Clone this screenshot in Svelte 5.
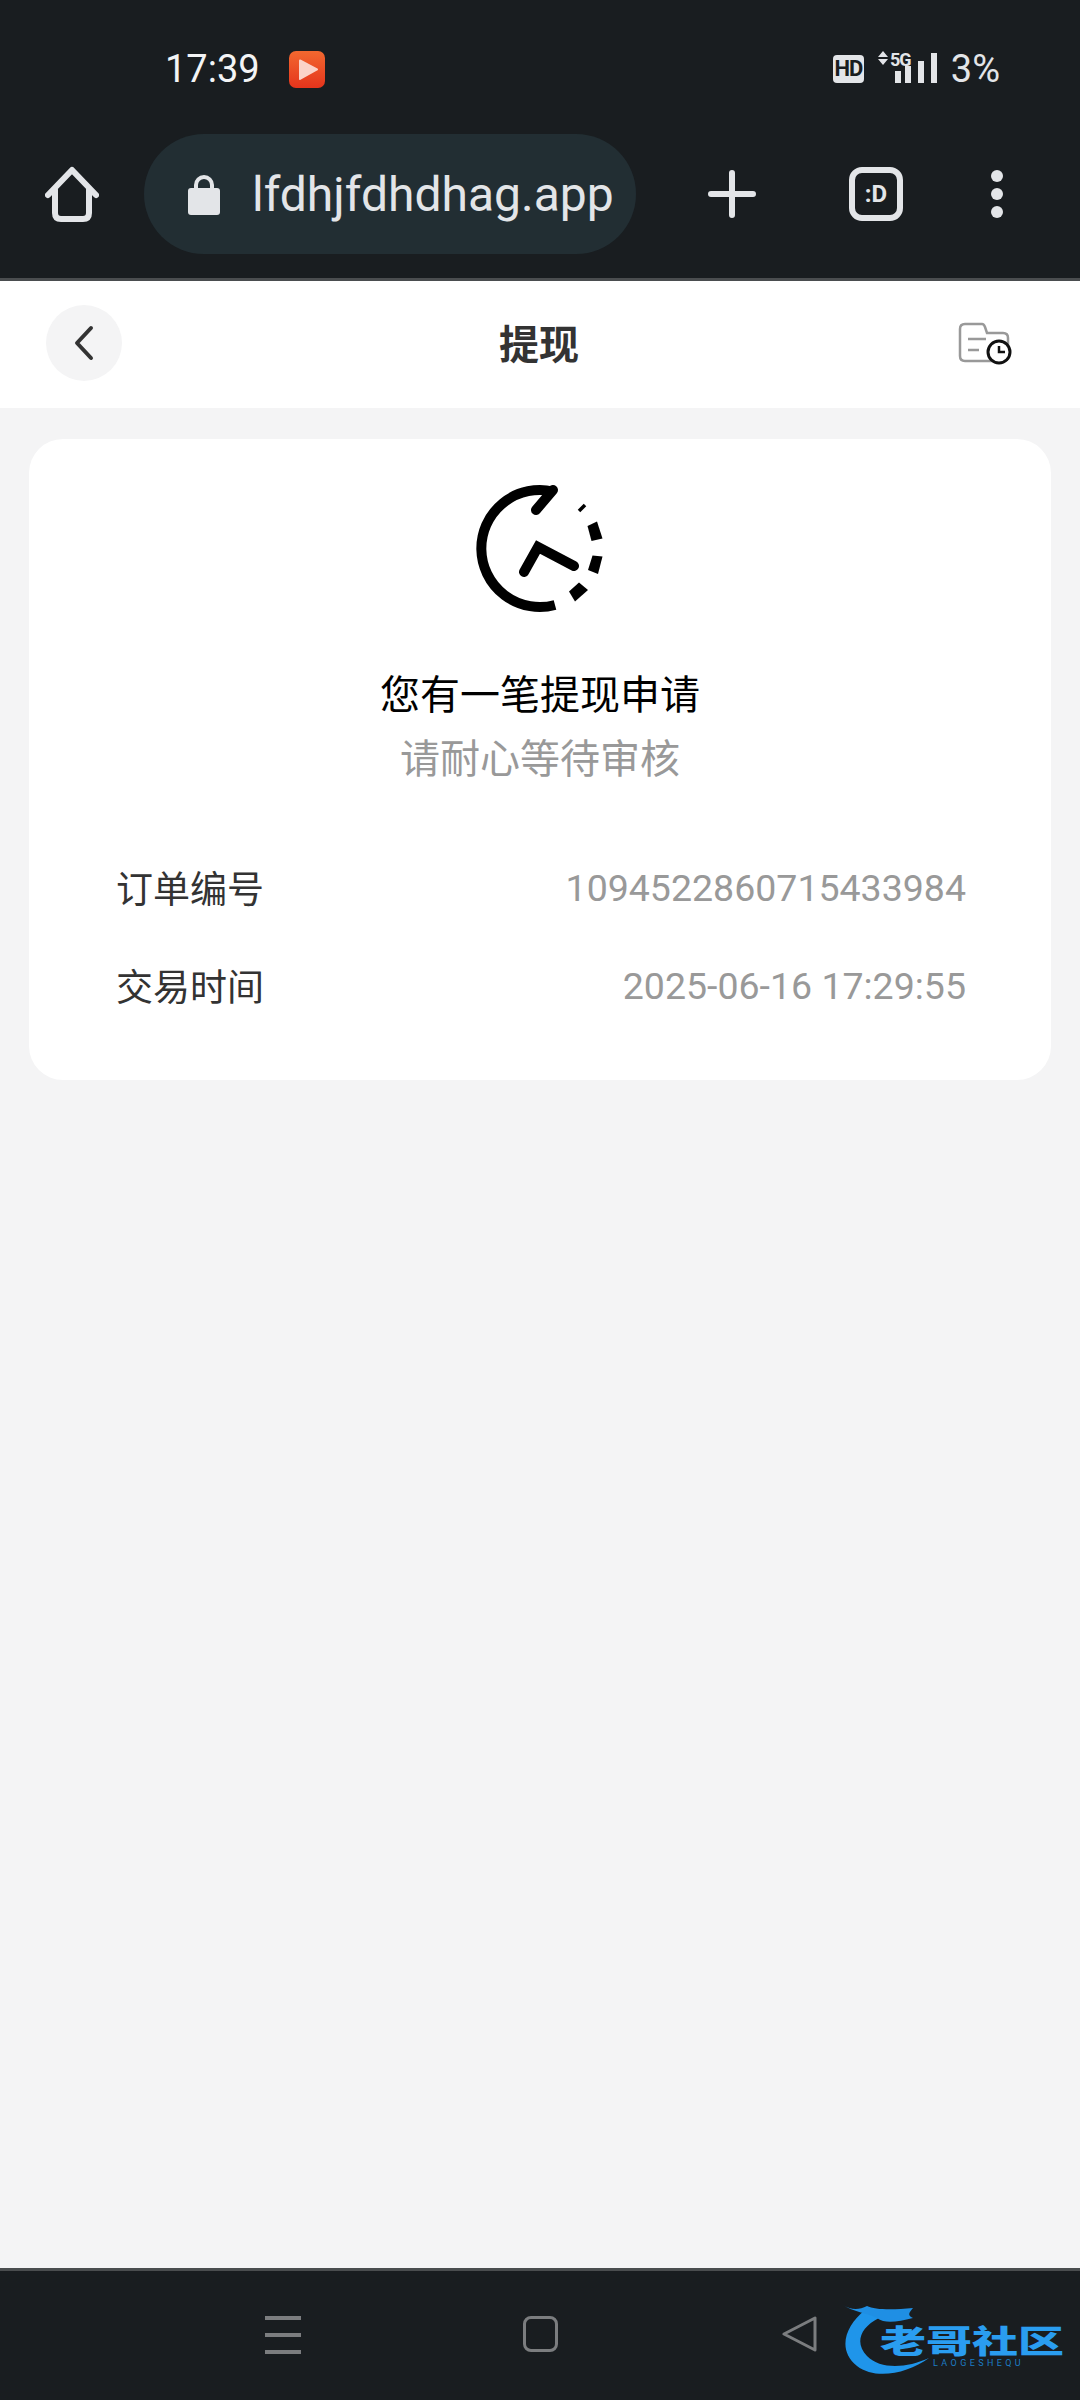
<script>
  const rows = [
    { label: '订单编号', value: '1094522860715433984' },
    { label: '交易时间', value: '2025-06-16 17:29:55' },
  ];
</script>

<div class="screen">
  <div class="topbar">
    <div class="status">
      <span class="time">17:39</span>
      <svg class="app-badge" width="36" height="37" viewBox="0 0 36 37">
        <defs>
          <linearGradient id="badge" x1="0" y1="0" x2="0" y2="1">
            <stop offset="0" stop-color="#f2682f" />
            <stop offset="1" stop-color="#e5341c" />
          </linearGradient>
        </defs>
        <rect width="36" height="37" rx="7" fill="url(#badge)" />
        <path d="M11 9.5 L28 18.5 L11 28 Z" fill="#fbd3c8" stroke="#fbd3c8" stroke-width="2" stroke-linejoin="round" />
      </svg>
      <div class="status-right">
        <span class="hd">HD</span>
        <svg class="signal" width="60" height="34" viewBox="0 0 60 34">
          <path d="M5 1 L10 7 H0 Z M5 15 L10 9 H0 Z" fill="#e3e5e8" />
          <rect x="17" y="21" width="6" height="12" fill="#e3e5e8" />
          <rect x="27" y="16" width="6" height="17" fill="#e3e5e8" />
          <rect x="40" y="11" width="6" height="22" fill="#e3e5e8" />
          <rect x="53" y="3" width="6" height="30" fill="#e3e5e8" />
          <text x="12" y="16" class="five-g">5G</text>
        </svg>
        <span class="battery">3%</span>
      </div>
    </div>
    <div class="toolbar">
      <svg class="home" width="54" height="56" viewBox="0 0 54 56" fill="none" stroke="#e3e5e8" stroke-width="6" stroke-linecap="round" stroke-linejoin="round">
        <path d="M3 29 L27 4 L51 29" />
        <path d="M10 24 V47 Q10 53 16 53 H38 Q44 53 44 47 V24" />
      </svg>
      <div class="pill">
        <svg width="32" height="42" viewBox="0 0 32 42">
          <path d="M8 18 V12 A8 8 0 0 1 24 12 V18" fill="none" stroke="#e3e5e8" stroke-width="4" />
          <rect y="15" width="32" height="27" rx="3" fill="#e3e5e8" />
        </svg>
        <span class="url">lfdhjfdhdhag.app</span>
      </div>
      <svg class="plus" width="48" height="48" viewBox="0 0 48 48" stroke="#e3e5e8" stroke-width="6" stroke-linecap="round">
        <path d="M24 3 V45 M3 24 H45" />
      </svg>
      <div class="tabs">:D</div>
      <div class="dots"><i></i><i></i><i></i></div>
    </div>
  </div>

  <main>
    <header>
      <button class="back" aria-label="返回">
        <svg width="22" height="36" viewBox="0 0 22 36" fill="none" stroke="#333" stroke-width="4" stroke-linecap="round" stroke-linejoin="round">
          <path d="M18 3 L4 18 L18 33" />
        </svg>
      </button>
      <h1>提现</h1>
      <svg class="records" width="70" height="60" viewBox="50 22 70 60" fill="none">
        <path d="M60 39 Q60 34 65 34 H82 Q84 34 85 37 L87 43 H103 Q108 43 108 48 V66 Q108 71 103 71 H65 Q60 71 60 66 Z" stroke="#999" stroke-width="2.5" />
        <path d="M68 49 H86 M68 60 H79" stroke="#999" stroke-width="2.5" />
        <circle cx="99" cy="62" r="11" fill="#fff" stroke="#111" stroke-width="3" />
        <path d="M99 56 V62 H105" stroke="#111" stroke-width="2.5" />
      </svg>
    </header>

    <section class="card">
      <svg class="pending" width="200" height="170" viewBox="0 0 200 170" fill="none" stroke="#000">
        <path d="M113 31.5 A58.5 58.5 0 1 0 115 145" stroke-width="10" />
        <path d="M113 30 L96 50 M84 112 L98 87 L134 106" stroke-width="10" stroke-linecap="round" stroke-linejoin="miter" />
        <path d="M139 51 L145 45" stroke-width="3.5" />
        <g fill="#000" stroke="none">
          <polygon points="147.5,66 157,61.5 162.5,78.5 151.5,81" />
          <polygon points="152.5,95.5 162.5,96.5 158,114 148,110" />
          <polygon points="139,122.5 148,130 135,141.5 129,131.5" />
        </g>
      </svg>
      <p class="title">您有一笔提现申请</p>
      <p class="sub">请耐心等待审核</p>
      <dl>
        {#each rows as row}
          <div class="row">
            <dt>{row.label}</dt>
            <dd>{row.value}</dd>
          </div>
        {/each}
      </dl>
    </section>
  </main>

  <nav>
    <div class="menu"><i></i><i></i><i></i></div>
    <div class="square"></div>
    <svg class="triangle" width="36" height="36" viewBox="0 0 36 36" fill="none" stroke="#7b7d7f" stroke-width="3" stroke-linejoin="round">
      <path d="M33 2 V34 L2 18 Z" />
    </svg>
  </nav>

  <div class="watermark">
    <svg width="120" height="78" viewBox="0 0 120 78">
      <path d="M24 10 C4 26 -4 50 16 66 C34 80 66 74 88 58 C66 68 40 70 26 56 C14 44 18 28 38 18 Z" fill="#1f95ea" />
      <path d="M2 5 C10 10 18 10 26 6 C34 10 52 10 72 8 C68 13 66 15 72 18 C56 22 44 24 36 18 C26 13 12 12 2 5 Z" fill="#1f8fe4" />
    </svg>
    <span class="wm-title">老哥社区</span>
    <span class="wm-sub">LAOGESHEQU</span>
  </div>
</div>

<style>
  :global(body) {
    margin: 0;
    background: #f4f4f5;
  }

  .screen {
    position: relative;
    display: flex;
    flex-direction: column;
    height: 2400px;
    overflow: hidden;
    background: #f4f4f5;
    font-family: Roboto, "Noto Sans CJK SC", sans-serif;
  }

  .topbar {
    background: #191d20;
    border-bottom: 3px solid #4a4d4f;
    height: 278px;
    flex-shrink: 0;
  }

  .status {
    display: flex;
    align-items: center;
    height: 130px;
    padding: 4px 80px 0 165px;
    color: #f3f4f5;
  }

  .time {
    font-size: 38px;
    width: 124px;
  }

  .status-right {
    margin-left: auto;
    display: flex;
    align-items: center;
  }

  .hd {
    background: #e3e5e8;
    color: #191d20;
    font-size: 22px;
    font-weight: 700;
    width: 31px;
    height: 28px;
    line-height: 28px;
    text-align: center;
    border-radius: 4px;
    letter-spacing: -1px;
  }

  .signal {
    margin-left: 14px;
    margin-top: -4px;
  }

  .five-g {
    font-size: 18px;
    font-weight: 700;
    fill: #e3e5e8;
    letter-spacing: -1px;
  }

  .battery {
    margin-left: 13px;
    font-size: 38px;
    color: #e3e5e8;
  }

  .toolbar {
    display: flex;
    align-items: center;
    padding-left: 45px;
    height: 120px;
  }

  .home {
    flex-shrink: 0;
  }

  .pill {
    margin-left: 45px;
    width: 492px;
    height: 120px;
    border-radius: 60px;
    background: #222e33;
    display: flex;
    align-items: center;
    gap: 32px;
    padding-left: 44px;
    box-sizing: border-box;
    flex-shrink: 0;
  }

  .url {
    color: #e3e5e8;
    font-size: 48px;
    white-space: nowrap;
  }

  .plus {
    margin-left: 72px;
    flex-shrink: 0;
  }

  .tabs {
    margin-left: 93px;
    width: 54px;
    height: 54px;
    box-sizing: border-box;
    border: 6px solid #e3e5e8;
    border-radius: 13px;
    color: #e3e5e8;
    font-size: 24px;
    font-weight: 700;
    line-height: 42px;
    text-align: center;
    flex-shrink: 0;
  }

  .dots {
    margin-left: 88px;
    display: flex;
    flex-direction: column;
    gap: 6px;
  }

  .dots i {
    display: block;
    width: 12px;
    height: 12px;
    border-radius: 50%;
    background: #e3e5e8;
  }

  main {
    flex: 1;
  }

  header {
    background: #fff;
    height: 127px;
    display: grid;
    grid-template-columns: 1fr auto 1fr;
    align-items: center;
    padding: 0 60px 0 46px;
  }

  .back {
    width: 76px;
    height: 76px;
    border: none;
    padding: 0;
    border-radius: 50%;
    background: #f4f4f5;
    display: flex;
    align-items: center;
    justify-content: center;
    margin-top: -3px;
  }

  h1 {
    margin: -6px 0 0;
    font-size: 40px;
    font-weight: 700;
    color: #333;
    transform: translateX(6px);
  }

  .records {
    justify-self: end;
    margin-top: -6px;
  }

  .card {
    margin: 31px 29px 0 29px;
    height: 641px;
    background: #fff;
    border-radius: 34px;
    display: flex;
    flex-direction: column;
    align-items: center;
    padding-top: 21px;
    box-sizing: border-box;
  }

  .pending {
    display: block;
  }

  .title {
    margin: 37px 0 0;
    font-size: 40px;
    line-height: 58px;
    color: #000;
  }

  .sub {
    margin: 6px 0 0;
    font-size: 40px;
    line-height: 58px;
    color: #999;
  }

  dl {
    margin: 71px 0 0;
    align-self: stretch;
    padding: 0 85px 0 87px;
    display: flex;
    flex-direction: column;
    gap: 44px;
  }

  .row {
    display: flex;
    justify-content: space-between;
    align-items: center;
    height: 54px;
  }

  dt {
    font-size: 37px;
    color: #333;
  }

  dd {
    margin: 2px 0 0;
    font-size: 37.5px;
    color: #999;
  }

  nav {
    background: #191d20;
    border-top: 3px solid #4a4d4f;
    height: 84px;
    flex-shrink: 0;
    display: flex;
    align-items: flex-start;
    padding: 45px 0 0 265px;
  }

  .menu {
    width: 36px;
    display: flex;
    flex-direction: column;
    gap: 13px;
  }

  .menu i {
    display: block;
    height: 4px;
    background: #7b7d7f;
  }

  .square {
    margin-left: 222px;
    width: 35px;
    height: 36px;
    box-sizing: border-box;
    border: 3px solid #7b7d7f;
    border-radius: 8px;
  }

  .triangle {
    margin-left: 224px;
  }

  .watermark {
    position: absolute;
    left: 841px;
    top: 2300px;
    width: 224px;
    height: 74px;
  }

  .watermark svg {
    position: absolute;
    left: 0;
    top: 0;
  }

  .wm-title {
    position: absolute;
    left: 39px;
    top: 24px;
    width: 184px;
    font-size: 46px;
    line-height: 36px;
    font-weight: 900;
    color: #2a9df0;
    white-space: nowrap;
    transform: scaleY(0.68);
  }

  .wm-sub {
    position: absolute;
    left: 92px;
    top: 58px;
    font-size: 9px;
    line-height: 10px;
    letter-spacing: 3.4px;
    color: #1c7cc4;
    white-space: nowrap;
  }
</style>
